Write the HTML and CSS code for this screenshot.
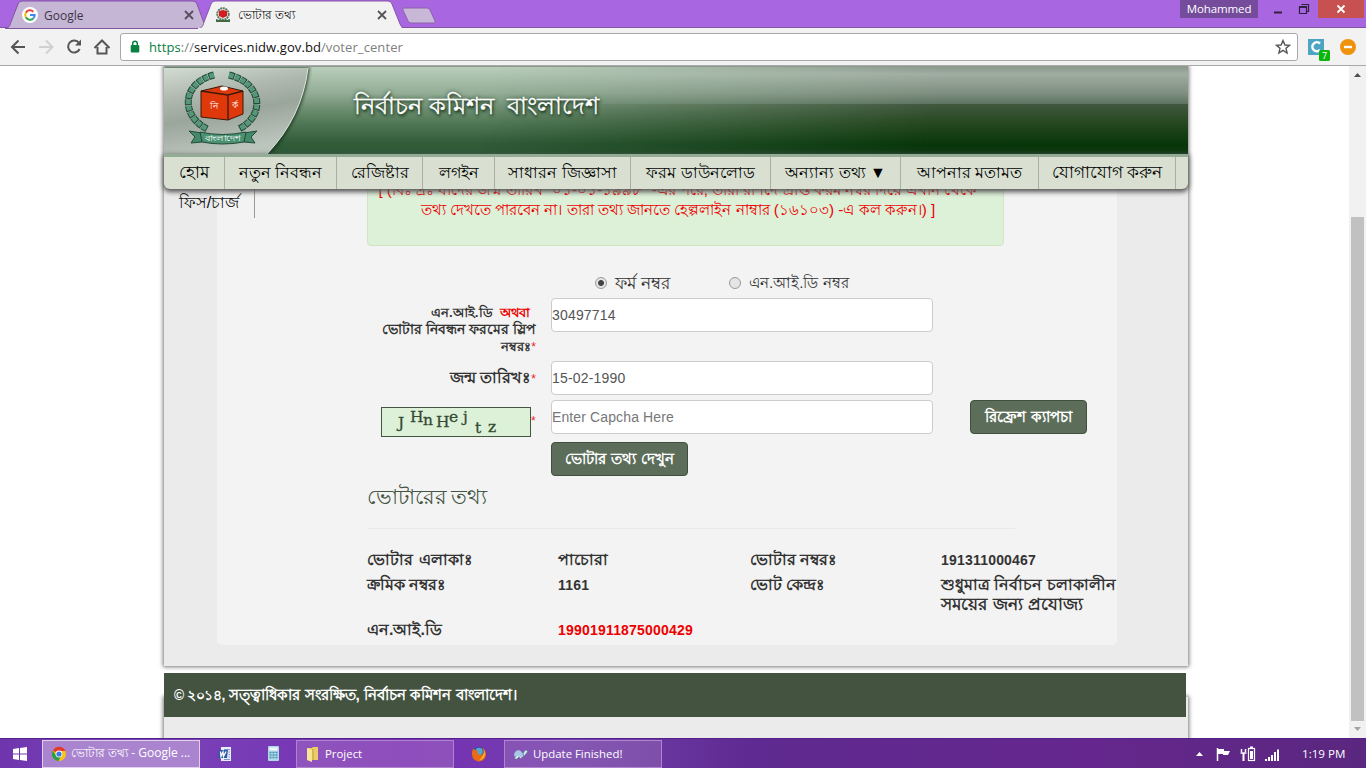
FILE: index.html
```html
<!DOCTYPE html>
<html lang="bn">
<head>
<meta charset="utf-8">
<title>ভোটার তথ্য</title>
<link rel="stylesheet" href="styles.css">
</head>
<body>
<div class="window">
  <header class="tabstrip">
    <svg class="tabshapes" width="450" height="29" viewBox="0 0 450 29">
      <path d="M5 28.5C9 28 10 26 11 22L18 4Q19 1 22 1H193Q196 1 197 4L206 28.5Z" fill="#c6b6d6" stroke="#82559f"/>
      <path d="M198 29C202 28 203 26 204 22L211 4Q212 1 215 1H388Q391 1 392 4L400 24Q402 29 405 29Z" fill="#f2f2f2" stroke="#8655aa"/>
      <path d="M198 29H405" stroke="#f2f2f2" stroke-width="2"/>
      <path d="M404 8H427Q429 8 430 10L435 21Q436 23 434 23H411Q409 23 408 21L403 10Q402 8 404 8Z" fill="#c8b7d7" stroke="#8a65a9"/>
    </svg>
    <div class="tab tab-one">
      <svg width="16" height="16" viewBox="0 0 16 16"><circle cx="8" cy="8" r="8" fill="#fff"/><g fill="none" stroke-width="2"><path d="M3.800 5.800A4.700 4.700 0 0 1 11.300 4.700" stroke="#ea4335"/><path d="M3.800 10.200A4.700 4.700 0 0 1 3.800 5.800" stroke="#fbbc05"/><path d="M11.300 11.400A4.800 4.800 0 0 1 3.800 10.200" stroke="#34a853"/><path d="M8 8H12.700A4.700 4.700 0 0 1 11.300 11.400" stroke="#4285f4"/></g></svg>
      <span class="tabname">Google</span>
      <svg class="x" width="10" height="10" viewBox="0 0 10 10"><path d="M1 1L9 9M9 1L1 9" stroke="#574d60" stroke-width="1.8"/></svg>
    </div>
    <div class="tab tab-two">
      <svg width="16" height="16" viewBox="0 0 16 16"><circle cx="8" cy="7" r="5.7" fill="none" stroke="#547a60" stroke-width="2" stroke-dasharray="2 .6"/><path d="M4 4L8 3L12 4V9L8 11L4 9Z" fill="#d61b20"/><path d="M1 12L4 13H12L15 12V15H1Z" fill="#416a45"/></svg>
      <span class="tabname tabbn">ভোটার তথ্য</span>
      <svg class="x" width="10" height="10" viewBox="0 0 10 10"><path d="M1 1L9 9M9 1L1 9" stroke="#555" stroke-width="1.8"/></svg>
    </div>
    <div class="winctl">
      <span class="user">Mohammed</span>
      <svg width="60" height="19" viewBox="0 0 60 19"><path d="M16 12.5H24" stroke="#322040" stroke-width="2"/><path d="M43.5 4.5H50.5V11.5H48M41.5 7H48.5V13.5H41.5Z" fill="none" stroke="#322040" stroke-width="1.2"/><path d="M41 7H49" stroke="#322040" stroke-width="2"/></svg>
      <span class="close"><svg width="10" height="10" viewBox="0 0 10 10"><path d="M1.5 1.5L8.5 8.5M8.5 1.5L1.5 8.5" stroke="#fff" stroke-width="1.8"/></svg></span>
    </div>
  </header>

  <div class="toolbar">
    <svg class="navicons" width="112" height="37" viewBox="0 0 112 37">
      <g fill="none" stroke="#555" stroke-width="2"><path d="M12 19H25M18.5 12.5L12 19L18.5 25.5"/><path d="M39 19H52M46 12.5L52.5 19L46 25.5" stroke="#d0d0d0"/><path d="M79 15A6 6 0 1 0 79.6 21"/><path d="M97.5 19V25.5H106.500V19M94.500 20L102 12.500L109.500 20"/></g><path d="M81 11.500V17.500H75Z" fill="#555"/>
    </svg>
    <div class="omnibox">
      <svg width="10" height="14" viewBox="0 0 10 14"><rect x="0.700" y="5" width="8.600" height="7.500" rx="1" fill="#0b8043"/><path d="M2.700 6V3.500A2.300 2.300 0 0 1 7.300 3.500V6" fill="none" stroke="#0b8043" stroke-width="1.500"/></svg>
      <span class="url"><i>https</i><b>://</b>services.nidw.gov.bd<b>/voter_center</b></span>
      <svg class="star" width="16" height="16" viewBox="0 0 16 16"><path d="M8 1.500L9.900 6L14.500 6.300L11 9.300L12.100 14L8 11.400L3.900 14L5 9.300L1.500 6.300L6.100 6Z" fill="none" stroke="#555" stroke-width="1.400"/></svg>
    </div>
    <svg width="68" height="37" viewBox="0 0 68 37"><rect x="10" y="11" width="16" height="16" fill="#4da5c4"/><path d="M22 15.500A4.500 4.500 0 1 0 22 22" fill="none" stroke="#fff" stroke-width="2.500"/><rect x="21" y="22" width="11" height="11" rx="1.500" fill="#0bb50b"/><text x="24" y="31" class="badge">7</text><circle cx="50" cy="19" r="8" fill="#ee930b"/><path d="M46 19H54" stroke="#fff" stroke-width="2.400"/></svg>
  </div>

  <main class="viewport">
    <div class="page">
      <div class="sheet">
        <div class="panel">
          <div class="alert"><p class="a1">[ (বিঃ দ্রঃ যাদের জন্ম তারিখ "০১-০১-১৯৯৮" -এর পরে, তারা রশিদে প্রাপ্ত ফরম নম্বর দিয়ে এখান থেকে</p><p class="a2">তথ্য দেখতে পারবেন না। তারা তথ্য জানতে হেল্পলাইন নাম্বার (১৬১০৩) -এ কল করুন।) ]</p></div>
          <div class="radios">
            <span class="radio on"></span><span class="r1">ফর্ম নম্বর</span>
            <span class="radio second"></span><span class="r2">এন.আই.ডি নম্বর</span>
          </div>
          <div class="field first">
            <div class="label small"><span class="l1">এন.আই.ডি&nbsp; <em>অথবা</em></span><span class="l2">ভোটার নিবন্ধন ফরমের স্লিপ</span><span class="l3">নম্বরঃ<sup>*</sup></span></div>
            <div class="input">30497714</div>
          </div>
          <div class="field second">
            <div class="label"><span class="l4">জন্ম তারিখঃ<sup>*</sup></span></div>
            <div class="input">15-02-1990</div>
          </div>
          <div class="field">
            <div class="label captcha"><svg width="150" height="30" viewBox="0 0 150 30"><rect x=".5" y=".5" width="149" height="29" fill="#ddf1d8" stroke="#445540"/><g class="cap"><text x="17" y="21">J</text><text x="29" y="15">H</text><text x="42" y="18">n</text><text x="55" y="20">H</text><text x="68" y="15">e</text><text x="82" y="15">j</text><text x="94" y="26">t</text><text x="107" y="25">z</text></g></svg><sup>*</sup></div>
            <div class="input hint">Enter Capcha Here</div>
            <div class="btn refresh"><span class="b1">রিফ্রেশ ক্যাপচা</span></div>
          </div>
          <div class="btn submit"><span class="b2">ভোটার তথ্য দেখুন</span></div>
          <h2><span class="h">ভোটারের তথ্য</span></h2>
          <hr>
          <div class="info">
            <span class="i1">ভোটার এলাকাঃ</span><span class="i2">পাচোরা</span><span class="i3">ভোটার নম্বরঃ</span><span class="num">191311000467</span>
            <span class="i4">ক্রমিক নম্বরঃ</span><span class="num">1161</span><span class="i5">ভোট কেন্দ্রঃ</span><span><span class="i6">শুধুমাত্র নির্বাচন চলাকালীন</span><br><span class="i7">সময়ের জন্য প্রযোজ্য</span></span>
            <span class="i8">এন.আই.ডি</span><span class="num red">19901911875000429</span>
          </div>
        </div>
      </div>
      <div class="under">
        <footer><span class="f"><span class="year">© ২০১৪,</span> সত্ত্বাধিকার সংরক্ষিত, নির্বাচন কমিশন বাংলাদেশ।</span></footer>
        <div class="tail"></div>
      </div>
      <div class="masthead">
        <div class="banner">
          <svg class="emblem" width="148" height="87" viewBox="0 0 148 87">
            <defs>
              <linearGradient id="silver" x1="0" y1="0" x2="0.300" y2="1"><stop offset="0" stop-color="#d3dcd2"/><stop offset="0.350" stop-color="#aeb8af"/><stop offset="0.600" stop-color="#9aa59c"/><stop offset="1" stop-color="#bcc5bd"/></linearGradient>
              <filter id="soft" x="-20%" y="-20%" width="140%" height="140%"><feGaussianBlur stdDeviation="1.500"/></filter>
            </defs>
            <path d="M0 0H146Q141 48 107 87H0Z" fill="#122d18" opacity=".7" filter="url(#soft)"/>
            <path d="M0 1H144Q138 50 103 87H0Z" fill="url(#silver)"/>
            <path d="M144 1Q138 50 103 87" fill="none" stroke="#dce8dd" stroke-width="1"/>
            <g fill="none" stroke-width="7" stroke="#234b37" stroke-dasharray="5.500 .8"><path d="M50 8C18 16 16 48 43 62"/><path d="M65 8C98 16 102 48 75 62"/></g>
            <g fill="none" stroke-width="5" stroke="#559879" stroke-dasharray="4.500 1.800"><path d="M50 8C18 16 16 48 43 62"/><path d="M65 8C98 16 102 48 75 62"/></g>
            <path d="M37 24L58 19L79 24V47L64 53L37 50Z" fill="#df390b" stroke="#3c1909"/><path d="M37 24L64 28L79 24M64 28V53" fill="none" stroke="#3c1909" stroke-width="1.300"/><ellipse cx="60" cy="21.500" rx="4" ry="2" fill="#fff"/>
            <path d="M25 64L38 66V75L27 76L31 70ZM93 64L80 66V75L91 76L87 70Z" fill="#438a6b" stroke="#234b37"/>
            <path d="M36 65Q58 70 82 65L80 75Q58 79 38 75Z" fill="#4a9271" stroke="#234b37"/>
            <text x="46" y="42" class="e1">নি</text><text x="68" y="41" class="e1">র্ক</text><text x="41" y="74" class="e2" textLength="36" lengthAdjust="spacingAndGlyphs">বাংলাদেশ</text>
          </svg>
          <span class="title">নির্বাচন কমিশন&nbsp; বাংলাদেশ</span>
        </div>
        <nav>
          <span class="n1">হোম</span><span class="n2">নতুন নিবন্ধন</span><span class="n3">রেজিষ্টার</span><span class="n4">লগইন</span><span class="n5">সাধারন জিজ্ঞাসা</span><span class="n6">ফরম ডাউনলোড</span><span class="n7">অন্যান্য তথ্য ▼</span><span class="n8">আপনার মতামত</span><span class="n9">যোগাযোগ করুন</span>
        </nav>
        <div class="navwrap"><span class="n10">ফিস/চার্জ</span></div>
      </div>
    </div>
    <div class="scroll"><svg width="13" height="17" viewBox="1 0 13 17"><path d="M4 11L7.500 7L11 11Z" fill="#505050"/></svg><div class="thumb"></div><svg width="13" height="17" viewBox="1 0 13 17"><path d="M4 6L7.500 10L11 6Z" fill="#a3a3a3"/></svg></div>
  </main>

  <div class="taskbar">
    <div class="start"><svg width="14" height="14" viewBox="0 0 14 14"><path d="M0 2L6 1V6.500H0ZM7 1L14 0V6.500H7ZM0 7.500H6V13L0 12ZM7 7.500H14V14L7 13Z" fill="#fff"/></svg></div>
    <div class="task active"><svg width="16" height="16" viewBox="0 0 16 16"><circle cx="8" cy="8" r="7" fill="#fbc116"/><path d="M8 8L1.800 4.500A7 7 0 0 1 14.500 5H8Z" fill="#e23b2e"/><path d="M1.800 4.500A7 7 0 0 0 7.500 15L10.500 9.500L5 9.500Z" fill="#2f9c4a"/><circle cx="8" cy="8" r="3.400" fill="#fff"/><circle cx="8" cy="8" r="2.600" fill="#3b7bdc"/></svg><span class="t1">ভোটার তথ্য - Google ...</span></div>
    <div class="pin"><svg width="14" height="16" viewBox="0 0 14 16"><path d="M3 1H13V15H3Z" fill="#e6edf8"/><path d="M6 3.500H12M10.500 6H12M10.500 8.500H12M10.500 11H12M6 13.500H12" stroke="#7c98c6"/><path d="M1 4H10L9 12H0Z" fill="#2e5ba6"/><path d="M2.500 5.500L3 10.500L5 6L5.500 10.500L8 5.500" fill="none" stroke="#fff" stroke-width="1.300"/></svg></div>
    <div class="pin calc"><svg width="11" height="15" viewBox="0 0 11 15"><rect width="11" height="15" rx="1" fill="#b4d7e5"/><rect x="1.500" y="1.500" width="8" height="3" fill="#eefafa"/><path d="M1.500 6.500H9.500M1.500 9H9.500M1.500 11.500H9.500" stroke="#3e94b7" stroke-width="1.500" stroke-dasharray="2 1"/></svg></div>
    <div class="task"><svg width="16" height="16" viewBox="0 0 16 16"><path d="M2 2H7L8 1H13V14H2Z" fill="#e9cd65"/><path d="M2 2L7 4V16L2 14Z" fill="#f7e597"/><path d="M8 3V14" stroke="#c39f3b"/></svg><span>Project</span></div>
    <div class="pin"><svg width="16" height="16" viewBox="0 0 16 16"><circle cx="8" cy="8" r="7" fill="#1f4f97"/><circle cx="8" cy="5.500" r="3.800" fill="#53a6d8"/><path d="M1.500 4L3 2.500L4 4L7 4.500L6 6L8 8.500Q11 9.500 12.500 7Q13 4 11 1.700Q15 3.500 15 8A7 7 0 0 1 1 9Q.7 6 1.500 4Z" fill="#e96b14"/><path d="M13 4Q16 12 8 14.500Q13.500 10 13 4Z" fill="#ffc629"/></svg></div>
    <div class="task update"><svg width="16" height="16" viewBox="0 0 16 16"><path d="M1 9Q2 3.500 7 4.500L11 8.500L10 11H2Z" fill="#a7c9e7"/><path d="M10 8L12 4L15 5L13 8L11 10ZM3 10L1 13H4L6 11L8 13L9 11" fill="#dce8f1" stroke="#536b86" stroke-width=".6"/></svg><span>Update Finished!</span></div>
    <div class="tray"><svg width="90" height="30" viewBox="0 0 90 30"><path d="M6 17L9.500 13L13 17Z" fill="#fff"/><path d="M27.500 9V22" stroke="#fff" stroke-width="1.500"/><path d="M28 10H34V12H40L38 16H33V15H28Z" fill="#fff"/><path d="M51.500 10V13M55.500 10V13M50.500 14H56.500" stroke="#fff" stroke-width="1.500"/><path d="M53.500 14V22" stroke="#fff" stroke-width="2"/><rect x="58.500" y="9.500" width="6" height="12" fill="none" stroke="#fff" stroke-width="1.200"/><path d="M60 12H63V20H60ZM60 7.500H63V9H60Z" fill="#fff"/><path d="M76 22V20M79 22V18M82 22V16M85 22V13M88 22V10.500" stroke="#fff" stroke-width="2"/></svg><span>1:19 PM</span></div>
  </div>
</div>
</body>
</html>
```
FILE: styles.css
```css
* { box-sizing: border-box; }
body { margin: 0; width: 1366px; height: 768px; overflow: hidden; font-family: "Liberation Sans", sans-serif; }
svg { display: block; flex: none; }
p { margin: 0; }
span { white-space: nowrap; }
.window { height: 768px; display: flex; flex-direction: column; }

.tabstrip { height: 28px; background: #a866e0; position: relative; display: flex; flex: none; border-bottom: 1px solid #82559f; font: 12px "Open Sans", sans-serif; }
.tabshapes { position: absolute; left: 0; top: 0; }
.tab { position: relative; display: flex; align-items: center; gap: 7px; height: 28px; padding-top: 2px; }
.tab-one { margin-left: 22px; width: 172px; color: #3e3546; }
.tab-one .tabname { margin-left: -1px; }
.tab-two { margin-left: 21px; width: 172px; color: #222; }
.tabbn { padding-top: 2px; font-weight: 500; color: #111; }
.tab .x { margin-left: auto; }
.winctl { margin-left: auto; height: 19px; display: flex; }
.user { width: 78px; height: 18px; background: #754c9c; color: #fff; text-align: center; font: 500 11.500px/18px "Open Sans", sans-serif; letter-spacing: -.1px; }
.close { width: 46px; height: 18px; margin-right: 2px; background: #c75050; display: flex; align-items: center; justify-content: center; }

.toolbar { height: 38px; flex: none; display: flex; background: #f2f2f2; border-bottom: 1px solid #a9a9a9; }
.omnibox { width: 1178px; height: 28px; margin: 5px 0 0 8px; border: 1px solid #a8a8a8; border-radius: 3px; background: #fff; display: flex; align-items: center; padding: 0 6px 0 9px; }
.url { margin-left: 9px; font: 13px "Open Sans", sans-serif; letter-spacing: .09px; color: #111; }
.url i { font-style: normal; color: #0b8043; }
.url b { font-weight: normal; color: #808080; }
.star { margin-left: auto; }
.badge { font: 9px "Open Sans"; fill: #fff; }

.viewport { height: 672px; flex: none; display: flex; background: #fff; overflow: hidden; }
.page { width: 1024px; margin-left: 164px; position: relative; flex: none; }
.sheet { height: 600px; padding-left: 53px; background: #ebebeb; box-shadow: 0 0 4px 1px #777; }
.panel { width: 900px; height: 579px; padding-left: 150px; background: #f3f3f3; border-radius: 0 0 5px 5px; color: #333; display: flow-root; }
.alert { width: 637px; height: 180px; padding: 113px 15px 0 0; background: #ddf0d8; border: 1px solid #cfe6c3; border-radius: 4px; text-align: center; color: #e00; font-size: 15.250px; line-height: 20px; white-space: nowrap; }
.a1 { font-size: 15.050px; }
.radios { height: 30px; margin: 22px 0 2px 228px; display: flex; align-items: center; line-height: 20px; font-size: 16.500px; }
.radio { width: 12px; height: 12px; border: 1px solid #999; border-radius: 50%; background: #e5e5e5; margin-right: 8px; flex: none; }
.radio.on { background: radial-gradient(circle, #444 0 2.500px, #e5e5e5 3.500px); }
.radios .r1 { width: 114px; }
.radios .r2 { font-size: 15.200px; }
.field { display: flex; height: 34px; }
.field.first { height: 63px; margin-top: -2px; }
.field.second { height: 39px; }
.label { width: 169px; margin-right: 15px; display: flex; flex-direction: column; align-items: flex-end; line-height: 34px; font-weight: bold; font-size: 15.800px; }
.label.small { padding-top: 6px; line-height: 17px; font-size: 13.400px; }
.label .l2 { font-size: 14.100px; }
.label em { font-style: normal; color: #e00; margin-right: 6px; }
sup { color: #e22; font: 12px/12px "Liberation Sans"; vertical-align: baseline; }
.label.captcha { flex-direction: row; align-items: flex-start; padding: 7px 0 0 14px; }
.captcha sup { padding-top: 8px; }
.cap { font: 16px "DejaVu Serif", serif; fill: #344b32; stroke: #344b32; stroke-width: .3px; }
.cap text { font-size: 15.500px; }
.input { width: 382px; height: 34px; border: 1px solid #ccc; border-radius: 4px; background: #fff; font-size: 14px; line-height: 32px; letter-spacing: .18px; color: #555; }
.hint { color: #777; letter-spacing: .12px; }
.btn { height: 34px; background: #5c6e5a; border: 1px solid #414f3f; border-radius: 4px; color: #fff; display: flex; align-items: center; justify-content: center; font-size: 15.150px; font-weight: bold; line-height: 20px; }
.refresh { width: 117px; margin-left: 37px; }
.submit { width: 137px; margin: 8px 0 0 184px; }
.submit .b2 { font-size: 14.950px; word-spacing: .5px; }
h2 { margin: 0; height: 40px; font-size: 21px; line-height: 41px; font-weight: normal; color: #445544; word-spacing: -2px; }
hr { width: 648px; margin: 12px 0 21px; border: 0; border-top: 1px solid #eaeaea; }
.info { display: grid; grid-template-columns: 191px 192px 191px 175px; grid-template-rows: 20px 40px 20px; line-height: 20px; row-gap: 5px; font-size: 16px; font-weight: bold; }
.info .i1 { font-size: 16px; word-spacing: 2px; }
.info .i6 { font-size: 15.750px; }
.info .i7 { font-size: 16.800px; word-spacing: 1px; }
.info .num { font-size: 14px; letter-spacing: .2px; }
.red { color: #e00; }
.under { margin-top: 7px; height: 65px; }
footer { position: relative; z-index: 1; width: 1022px; height: 44px; padding-left: 10px; background: #435340; color: #fff; font-size: 15.400px; line-height: 44px; font-weight: bold; }
.year { font-size: 13.800px; letter-spacing: -.4px; }
.tail { height: 60px; margin-top: -20px; background: #ebebeb; box-shadow: 0 0 4px 1px #777; }

.masthead { position: absolute; top: 0; left: 0; width: 1024px; z-index: 2; }
.banner { position: relative; height: 88px; display: flex; border-top: 1px solid #8a9b8d; background: linear-gradient(#b9cebb, #93ad96 30%, #6d8e71 48%, #507755 65%, #305c38 88%, #2e5937); }
.banner::before { content: ""; position: absolute; inset: 0; background: linear-gradient(#8b998d, #a0ada1 8%, #7f8f80 30%, #5f7562 42%, #41583f 43%, #25471f 65%, #073509 90%, #123b14); -webkit-mask-image: linear-gradient(100deg, transparent 32%, #000 75%); mask-image: linear-gradient(100deg, transparent 32%, #000 75%); }
.emblem, .title { position: relative; }
.title { margin: 22px 0 0 42px; font-size: 23.500px; line-height: 34px; font-weight: 500; color: #fff; -webkit-text-stroke: .3px #fff; text-shadow: 1px 2px 3px #173419, 0 0 4px #173419; }
.e1 { font-size: 9px; fill: #fff; }
.e2 { font-size: 8px; fill: #fff; }
nav { height: 35px; display: flex; background: #d9e0d1; border-top: 3px solid #94ab96; border-radius: 0 0 6px 6px; box-shadow: 0 2px 5px 1px #555; font-size: 16.300px; font-weight: 500; color: #000; position: relative; }
nav span { border-right: 1px solid #a7b0a2; text-align: center; line-height: 31px; overflow: hidden; }
.n1 { width: 61px; font-size: 17px; } .n2 { width: 112px; } .n3 { width: 86px; } .n4 { width: 72px; } .n5 { width: 136px; } .n6 { width: 140px; } .n7 { width: 130px; font-size: 16px; } .n8 { width: 138px; } .n9 { width: 137px; font-size: 16.800px; }
.navwrap { width: 91px; height: 29px; border-right: 1px solid #999; text-align: center; font-size: 16.300px; line-height: 27px; color: #111; }

.scroll { width: 17px; margin-left: auto; background: #f1f1f1; padding: 0 2px; display: flex; flex-direction: column; }
.thumb { height: 504px; margin-top: 134px; background: #c1c1c1; width: 13px; }

.taskbar { height: 30px; flex: none; display: flex; align-items: center; border-top: 1px solid #54218c; background: linear-gradient(90deg, #6f35ad 0, #7944b8 10%, #772fb4 30%, #7141ae 42%, #5f2a91 55%, #65278d 80%, #5a277f); color: #fff; font: 11.400px "Open Sans", sans-serif; }
.start { width: 42px; padding-left: 13px; }
.task { width: 158px; height: 28px; border: 1px solid #ae83d0; background: rgba(203,159,209,.28); display: flex; align-items: center; gap: 4px; padding-left: 8px; }
.task.active { background: #aa84cf; border-color: #e0d0ec; font-size: 12px; }
.pin { width: 50px; display: flex; justify-content: center; }
.calc { width: 46px; }
.update { background: rgba(170,130,190,.35); }
.tray { margin-left: auto; display: flex; align-items: center; width: 176px; gap: 22px; font-size: 11.600px; }
```
